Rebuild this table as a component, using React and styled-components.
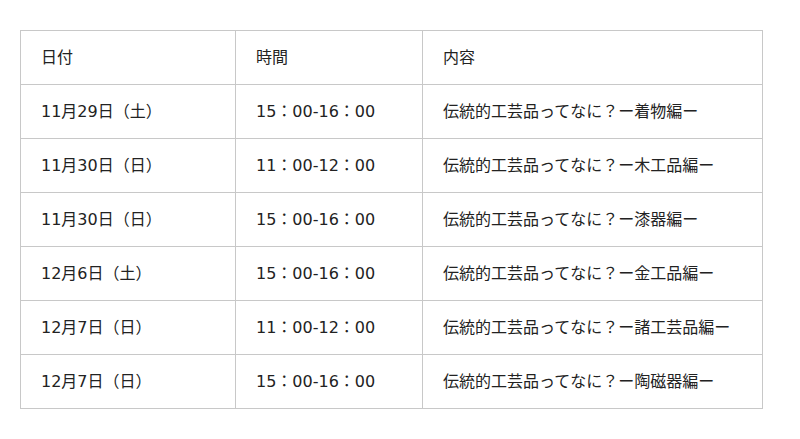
import styled, { createGlobalStyle } from "styled-components";

const GlobalStyle = createGlobalStyle`
  body {
    margin: 0;
    background: #fff;
    font-family: "DejaVu Sans", "Noto Sans CJK JP", sans-serif;
    color: #222;
  }
`;

const Wrap = styled.div`
  padding: 30px 20px;
`;

const Table = styled.table`
  width: 742px;
  border-collapse: collapse;
  table-layout: fixed;
  border: 1px solid #ddd;
`;

const Cell = styled.td`
  height: 54px;
  padding: 0 20px 3px;
  border: 1px solid #c8c8c8;
  font-size: 16px;
  vertical-align: middle;
  box-sizing: border-box;
  width: ${(p) => p.w}px;
`;

const schedule = [
  ["11月29日（土）", "15：00-16：00", "伝統的工芸品ってなに？ー着物編ー"],
  ["11月30日（日）", "11：00-12：00", "伝統的工芸品ってなに？ー木工品編ー"],
  ["11月30日（日）", "15：00-16：00", "伝統的工芸品ってなに？ー漆器編ー"],
  ["12月6日（土）", "15：00-16：00", "伝統的工芸品ってなに？ー金工品編ー"],
  ["12月7日（日）", "11：00-12：00", "伝統的工芸品ってなに？ー諸工芸品編ー"],
  ["12月7日（日）", "15：00-16：00", "伝統的工芸品ってなに？ー陶磁器編ー"],
];

export default function App() {
  return (
    <>
      <GlobalStyle />
      <Wrap>
        <Table>
          <tbody>
            <tr>
              <Cell w={215}>日付</Cell>
              <Cell w={187}>時間</Cell>
              <Cell w={340}>内容</Cell>
            </tr>
            {schedule.map((row, i) => (
              <tr key={i}>
                <Cell>{row[0]}</Cell>
                <Cell>{row[1]}</Cell>
                <Cell>{row[2]}</Cell>
              </tr>
            ))}
          </tbody>
        </Table>
      </Wrap>
    </>
  );
}
